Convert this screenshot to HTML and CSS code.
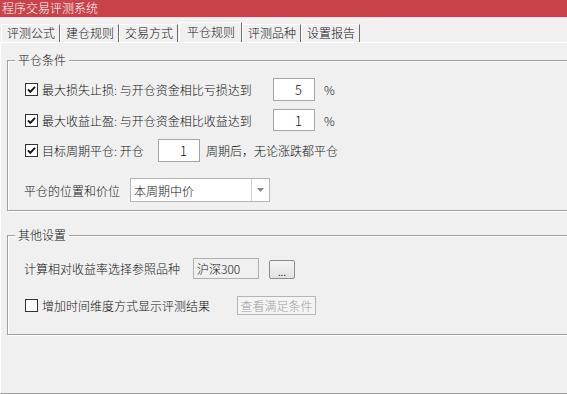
FILE: index.html
```html
<!DOCTYPE html>
<html lang="zh">
<head>
<meta charset="utf-8">
<title>程序交易评测系统</title>
<link rel="stylesheet" href="styles.css">
</head>
<body>
<div class="window">
  <div class="titlebar">程序交易评测系统</div>
  <div class="tabs">
    <div class="tab">评测公式</div>
    <div class="tab">建仓规则</div>
    <div class="tab">交易方式</div>
    <div class="tab active">平仓规则</div>
    <div class="tab">评测品种</div>
    <div class="tab">设置报告</div>
  </div>
  <div class="panel">
    <div class="group g1">
      <span class="legend">平仓条件</span>
      <div class="row r1">
        <svg class="cb" width="13" height="13" viewBox="0 0 13 13"><rect x="0.5" y="0.5" width="12" height="12" fill="#fff" stroke="#333"/><path d="M3 6.3 L5.3 8.8 L10 3.8" fill="none" stroke="#111" stroke-width="1.9"/></svg>
        <span class="lbl w231">最大损失止损: 与开仓资金相比亏损达到</span>
        <span class="edit num h23">5</span>
        <span class="unit">%</span>
      </div>
      <div class="row r2">
        <svg class="cb" width="13" height="13" viewBox="0 0 13 13"><rect x="0.5" y="0.5" width="12" height="12" fill="#fff" stroke="#333"/><path d="M3 6.3 L5.3 8.8 L10 3.8" fill="none" stroke="#111" stroke-width="1.9"/></svg>
        <span class="lbl w231">最大收益止盈: 与开仓资金相比收益达到</span>
        <span class="edit num h22">1</span>
        <span class="unit">%</span>
      </div>
      <div class="row r3">
        <svg class="cb" width="13" height="13" viewBox="0 0 13 13"><rect x="0.5" y="0.5" width="12" height="12" fill="#fff" stroke="#333"/><path d="M3 6.3 L5.3 8.8 L10 3.8" fill="none" stroke="#111" stroke-width="1.9"/></svg>
        <span class="lbl w116">目标周期平仓: 开仓</span>
        <span class="edit num h23">1</span>
        <span class="after">周期后，无论涨跌都平仓</span>
      </div>
      <div class="row r4">
        <span class="lbl w106">平仓的位置和价位</span>
        <div class="combo">
          <span class="combo-text">本周期中价</span>
          <span class="combo-arrow"><svg width="7" height="4" viewBox="0 0 7 4"><path d="M0 0 H7 L3.5 4 Z" fill="#888"/></svg></span>
        </div>
      </div>
    </div>
    <div class="group g2">
      <span class="legend">其他设置</span>
      <div class="row ra">
        <span class="lbl w169">计算相对收益率选择参照品种</span>
        <span class="edit ro">沪深300</span>
        <span class="btn dots">...</span>
      </div>
      <div class="row rb">
        <svg class="cb" width="13" height="13" viewBox="0 0 13 13"><rect x="0.5" y="0.5" width="12" height="12" fill="#fff" stroke="#333"/></svg>
        <span class="lbl w195">增加时间维度方式显示评测结果</span>
        <span class="btn disabled">查看满足条件</span>
      </div>
    </div>
  </div>
</div>
</body>
</html>
```
FILE: styles.css
```css
html, body {
  margin: 0;
  padding: 0;
  background: #f0f0f0;
  overflow: hidden;
}
body {
  font-family: "Noto Sans CJK SC", "Microsoft YaHei", sans-serif;
  font-size: 12px;
  font-weight: 300;
  color: #111;
}
.window {
  width: 567px;
  height: 394px;
  display: flex;
  flex-direction: column;
  overflow: hidden;
}
.titlebar {
  height: 17px;
  line-height: 16px;
  background: #c9434b;
  color: #fff;
  padding-left: 2px;
  flex: none;
}
.tabs {
  height: 25px;
  display: flex;
  align-items: flex-end;
  padding-left: 1px;
  flex: none;
}
.tab {
  height: 17px;
  line-height: 16px;
  padding: 0 4px 0 5px;
  border-left: 1px solid #fff;
  border-top: 1px solid #fff;
  border-right: 1px solid #6e6e6e;
}
.tab.active {
  height: 19px;
  line-height: 18px;
  padding: 0 6px 0 7px;
  margin-left: 1px;
  background: #f0f0f0;
}
.panel {
  flex: 1;
  border-left: 1px solid #fff;
  border-top: 1px solid #fff;
  border-bottom: 1px solid #a0a0a0;
  display: flex;
  flex-direction: column;
  overflow: hidden;
}
.group {
  position: relative;
  border: 1px solid #a0a0a0;
  box-shadow: inset 1px 1px 0 #fff, 1px 1px 0 #fff;
  margin-left: 6px;
  margin-right: -20px;
  display: flex;
  flex-direction: column;
}
.g1 {
  margin-top: 17px;
  padding: 17px 0 8px 17px;
}
.g2 {
  margin-top: 24px;
  padding: 22px 0 19px 17px;
}
.legend {
  position: absolute;
  top: -9px;
  left: 7px;
  padding: 0 3px;
  line-height: 16px;
  background: #f0f0f0;
}
.row {
  display: flex;
  align-items: center;
}
.r1 { height: 23px; }
.r2 { height: 22px; margin-top: 8px; }
.r3 { height: 23px; margin-top: 8px; }
.r4 { height: 24px; margin-top: 16px; margin-left: -1px; }
.ra { height: 21px; margin-left: -1px; }
.rb { height: 19px; margin-top: 17px; }
.cb {
  flex: none;
  margin-right: 4px;
}
.lbl {
  white-space: nowrap;
  flex: none;
}
.w231 { width: 231px; }
.w116 { width: 116px; }
.w106 { width: 106px; }
.w169 { width: 169px; }
.w195 { width: 195px; }
.edit {
  box-sizing: border-box;
  background: #fff;
  border: 1px solid #a5a5a5;
  flex: none;
  display: flex;
  align-items: center;
}
.edit.num {
  width: 42px;
  justify-content: flex-end;
  padding-right: 12px;
  font-size: 13px;
}
.h23 { height: 23px; }
.h22 { height: 22px; }
.unit {
  margin-left: 9px;
}
.after {
  margin-left: 6px;
  white-space: nowrap;
}
.combo {
  box-sizing: border-box;
  width: 140px;
  height: 24px;
  background: #fff;
  border: 1px solid #b4b4b4;
  display: flex;
  align-items: stretch;
}
.combo-text {
  flex: 1;
  padding-left: 3px;
  display: flex;
  align-items: center;
}
.combo-arrow {
  width: 17px;
  border-left: 1px solid #d0d0d0;
  display: flex;
  align-items: center;
  justify-content: center;
}
.edit.ro {
  width: 66px;
  height: 21px;
  background: #f0f0f0;
  border-color: #b0b0b0;
  padding-left: 3px;
}
.btn {
  box-sizing: border-box;
  flex: none;
  display: flex;
  align-items: center;
  justify-content: center;
  border: 1px solid #a8a8a8;
  border-radius: 2px;
}
.dots {
  width: 26px;
  height: 19px;
  margin-left: 10px;
  margin-top: 2px;
  background: linear-gradient(#f4f4f4, #e2e2e2);
  border-color: #8c8c8c;
  font-size: 11px;
  line-height: 1;
  padding-top: 3px;
}
.disabled {
  width: 79px;
  height: 19px;
  background: #f4f4f4;
  border-color: #b5b5b5;
  color: #a0a0a0;
  border-radius: 0;
}
```
